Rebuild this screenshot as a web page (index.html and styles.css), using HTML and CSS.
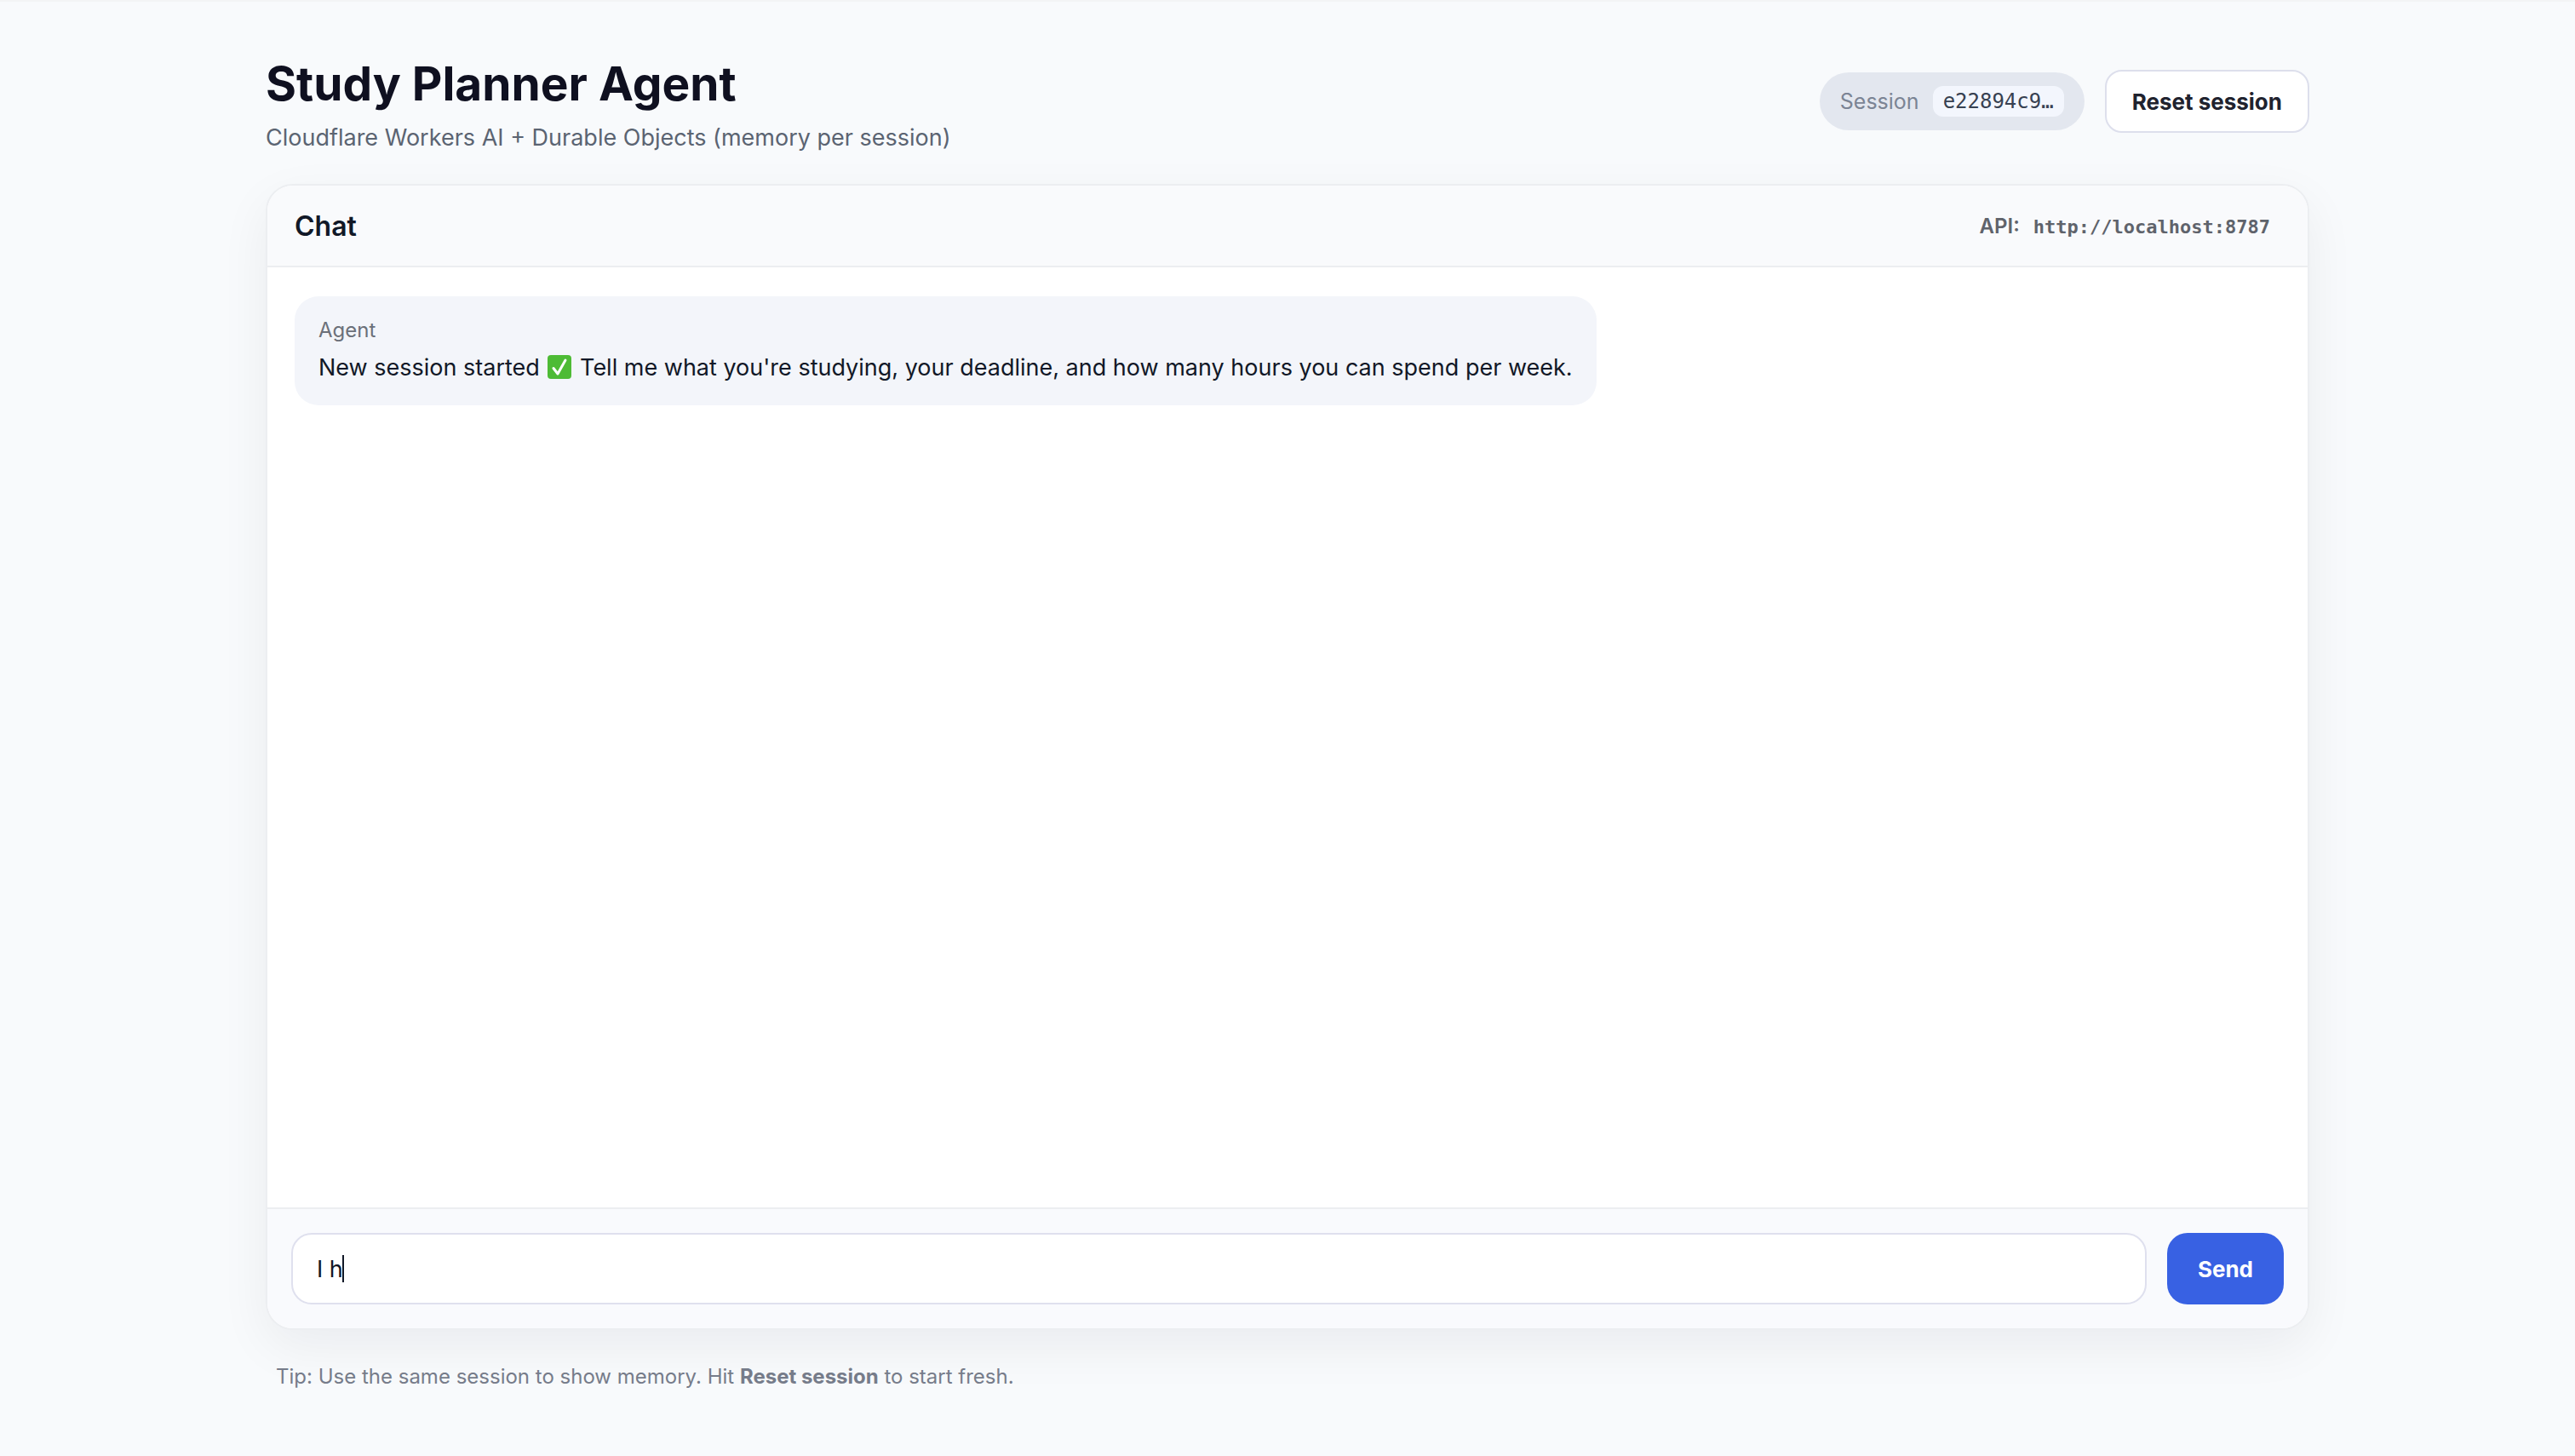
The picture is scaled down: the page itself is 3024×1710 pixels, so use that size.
FILE: index.html
```html
<!DOCTYPE html>
<html lang="en">
<head>
    <meta charset="UTF-8">
    <meta name="viewport" content="width=device-width, initial-scale=1.0">
    <title>Study Planner Agent</title>
    <link rel="stylesheet" href="styles.css">
</head>
<body>
<div class="page">
    <header class="top">
        <div>
            <h1>Study Planner Agent</h1>
            <p class="subtitle">Cloudflare Workers AI + Durable Objects (memory per session)</p>
        </div>
        <div class="actions">
            <div class="pill">
                <span>Session</span>
                <code id="session">e22894c9…</code>
            </div>
            <button type="button" class="reset">Reset session</button>
        </div>
    </header>

    <main class="card">
        <div class="card-header">
            <h2>Chat</h2>
            <div class="api">API: <code>http://localhost:8787</code></div>
        </div>
        <div class="messages">
            <div class="msg">
                <div class="role">Agent</div>
                <div class="text">New session started <svg class="check" viewBox="0 0 28 28" role="img" aria-label="done"><rect width="28" height="28" rx="4" fill="#4dbb35"/><path d="M7 15.5 L12 22 L21 6" fill="none" stroke="#fff" stroke-width="3" stroke-linecap="round" stroke-linejoin="round"/></svg> Tell me what you're studying, your deadline, and how many hours you can spend per week.</div>
            </div>
        </div>
        <form class="composer">
            <div class="field">
                <input type="text" id="message" aria-label="Message" value="I h" autocomplete="off">
                <span class="caret"></span>
            </div>
            <button type="submit" class="send">Send</button>
        </form>
    </main>

    <footer class="tip">Tip: Use the same session to show memory. Hit <b>Reset session</b> to start fresh.</footer>
</div>
</body>
</html>
```
FILE: styles.css
```css
*{
    box-sizing:border-box;
}
body{
    margin:0;
    background:#f8fafc;
    border-top:2px solid #f3f4f5;
    color:#111827;
    font-family:Inter,"Liberation Sans",sans-serif;
    font-size:27px;
}
h1,h2,p{
    margin:0;
}
button,input{
    font-family:inherit;
}
code{
    font-family:"DejaVu Sans Mono","Liberation Mono",monospace;
}
.page{
    display:flex;
    flex-direction:column;
    width:100%;
    max-width:2464px;
    min-height:calc(100vh - 2px);
    margin:0 auto;
    padding:60px 32px 76px;
}
.top{
    display:flex;
    align-items:flex-start;
    justify-content:space-between;
    margin-bottom:34px;
}
h1{
    font-size:55px;
    line-height:72px;
    font-weight:700;
    color:#0f1020;
}
.subtitle{
    margin-top:8px;
    line-height:40px;
    color:#5b6472;
}
.actions{
    display:flex;
    align-items:center;
    gap:24px;
    margin-top:20px;
}
.pill{
    display:flex;
    align-items:center;
    gap:16px;
    height:68px;
    padding:0 24px;
    border-radius:34px;
    background:#e3e7ef;
    color:#7b8494;
    font-size:25px;
}
.pill code{
    padding:0 12px;
    border-radius:12px;
    background:#f3f6fd;
    color:#374151;
    font-size:24px;
    line-height:36px;
}
.reset{
    height:74px;
    padding:0 30px;
    border:2px solid #dddfec;
    border-radius:20px;
    background:#fff;
    color:#20222e;
    font-size:26px;
    font-weight:700;
}
.card{
    display:flex;
    flex:1;
    flex-direction:column;
    overflow:hidden;
    border:2px solid #eceef1;
    border-radius:32px;
    background:#fff;
    box-shadow:0 20px 60px rgba(17,24,39,0.06);
}
.card-header{
    display:flex;
    align-items:center;
    justify-content:space-between;
    height:96px;
    padding:0 44px 0 32px;
    border-bottom:2px solid #eceef1;
    background:#f9fafc;
}
h2{
    font-size:32px;
    font-weight:600;
}
.api{
    color:#5f636b;
    font-size:24px;
    font-weight:600;
}
.api code{
    margin-left:10px;
    font-size:22px;
    font-weight:700;
}
.messages{
    flex:1;
    padding:34px 32px;
}
.msg{
    width:fit-content;
    max-width:80%;
    padding:24px 28px;
    border-radius:28px;
    background:#f3f5fa;
}
.role{
    margin-bottom:8px;
    color:#6b7079;
    font-size:24px;
    line-height:32px;
}
.text{
    line-height:40px;
}
.check{
    width:28px;
    height:28px;
    margin:0 2px;
    vertical-align:-4px;
}
.composer{
    display:flex;
    gap:24px;
    padding:28px;
    border-top:2px solid #eceef1;
    background:#f9fafd;
}
.field{
    position:relative;
    flex:1;
}
.field input{
    width:100%;
    height:84px;
    padding:0 28px;
    border:2px solid #dfe0ee;
    border-radius:24px;
    outline:none;
    background:#fff;
    color:#111827;
    font-size:27px;
}
/* text cursor after the typed draft */
.caret{
    position:absolute;
    top:26px;
    left:60px;
    width:2px;
    height:32px;
    background:#111827;
}
.send{
    height:84px;
    padding:0 36px;
    border:0;
    border-radius:24px;
    background:#3861e3;
    color:#fff;
    font-size:26px;
    font-weight:700;
}
.tip{
    padding:38px 12px 0;
    color:#767c8a;
    font-size:24px;
    line-height:34px;
}
```
